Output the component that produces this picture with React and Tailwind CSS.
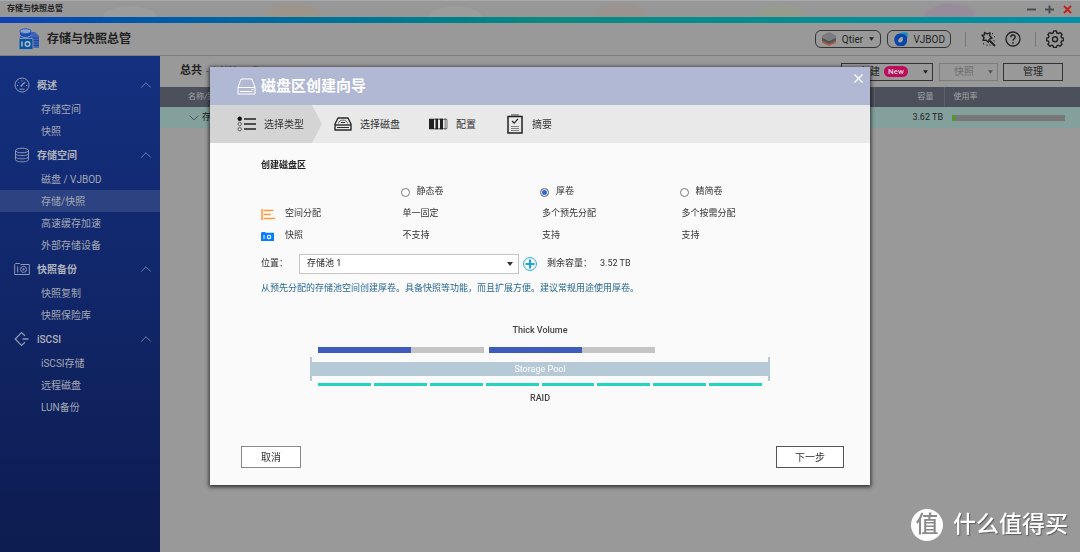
import React, { useState } from 'react';
import { ChevronDown, ChevronUp } from 'lucide-react';
import clsx from 'clsx';

const menu = [
  { id: 'overview', name: '概述', icon: GaugeIcon, items: ['存储空间', '快照'] },
  { id: 'storage', name: '存储空间', icon: DatabaseIcon, items: ['磁盘 / VJBOD', '存储/快照', '高速缓存加速', '外部存储设备'] },
  { id: 'backup', name: '快照备份', icon: SnapshotOutlineIcon, items: ['快照复制', '快照保险库'] },
  { id: 'iscsi', name: 'iSCSI', icon: IscsiIcon, items: ['iSCSI存储', '远程磁盘', 'LUN备份'] },
];

const steps = [
  { name: '选择类型', icon: TypeIcon },
  { name: '选择磁盘', icon: DiskIcon },
  { name: '配置', icon: ConfigIcon },
  { name: '摘要', icon: SummaryIcon },
];

const volumeTypes = [
  { id: 'static', name: '静态卷', allocation: '单一固定', snapshot: '不支持' },
  { id: 'thick', name: '厚卷', allocation: '多个预先分配', snapshot: '支持' },
  { id: 'thin', name: '精简卷', allocation: '多个按需分配', snapshot: '支持' },
];

function GaugeIcon() {
  return (
    <svg width="16" height="16" viewBox="0 0 16 16" fill="none" stroke="currentColor">
      <circle cx="8" cy="8" r="7" />
      <path d="M7.5 8.5 11 5" strokeWidth="1.2" />
      <circle cx="7.4" cy="8.8" r="1" fill="currentColor" stroke="none" />
      <path d="M3 8.5h1.2M4.3 5l.8.8M8 3.2v1.2M12 8.5h1.2M5.5 12.2h5" />
    </svg>
  );
}

function DatabaseIcon() {
  return (
    <svg width="16" height="16" viewBox="0 0 16 16" fill="none" stroke="currentColor">
      <ellipse cx="8" cy="3.5" rx="6.5" ry="2.3" />
      <path d="M1.5 3.5v9.2c0 1.2 3 2.1 6.5 2.1s6.5-.9 6.5-2.1V3.5" />
      <path d="M1.5 6.6c0 1.2 3 2.1 6.5 2.1s6.5-.9 6.5-2.1M1.5 9.7c0 1.2 3 2.1 6.5 2.1s6.5-.9 6.5-2.1" />
    </svg>
  );
}

function SnapshotOutlineIcon() {
  return (
    <svg width="16" height="16" viewBox="0 0 16 16" fill="none" stroke="currentColor">
      <path d="M.7 13.5v-10l1-1h4l1 1h8.6v10z" />
      <path d="M3.7 5.5v6" />
      <circle cx="9.5" cy="8.4" r="3" />
      <circle cx="9.5" cy="8.4" r="1.1" fill="currentColor" stroke="none" />
    </svg>
  );
}

function IscsiIcon() {
  return (
    <svg width="16" height="16" viewBox="0 0 16 16" fill="none" stroke="currentColor" strokeWidth="1.3">
      <path d="M11 4.8 7.5 1.6 1.2 8l6.3 6.4L11 11.2M8.5 8h6" />
    </svg>
  );
}

function AppLogo() {
  return (
    <svg width="22" height="22" viewBox="0 0 22 22">
      <path d="M12 4h5l4 4v12h-9z" fill="#3f63b5" />
      <path d="M14 10h7M14 12.5h7M14 15h7M14 17.5h7" stroke="#1d429c" />
      <path d="M2 3v9h11V3z" fill="#1c4bb0" />
      <ellipse cx="7.5" cy="3.2" rx="5.6" ry="2.4" fill="#8ba3c9" stroke="#1f5cc0" />
      <path d="M2 7c0 1.4 2.4 2.4 5.5 2.4S13 8.4 13 7" fill="none" stroke="#8ba3c9" />
      <rect x="1" y="10.5" width="14" height="11" rx="1" fill="#0a559f" stroke="#97a5b3" strokeWidth=".8" />
      <path d="M4 13.5v5" stroke="#b4bec8" strokeWidth="1.4" />
      <circle cx="9.5" cy="16" r="2.3" fill="none" stroke="#b4bec8" strokeWidth="1.4" />
    </svg>
  );
}

function QtierIcon() {
  return (
    <svg width="14" height="14" viewBox="0 0 14 14">
      <path d="M0 8v2.5L7 14l7-3.5V8l-7 3.5z" fill="#b05a44" />
      <path d="M0 5.5v3L7 12l7-3.5v-3L7 9z" fill="#505459" />
      <path d="M7 0 14 3.5v2L7 9 0 5.5v-2z" fill="#7c7c7c" />
    </svg>
  );
}

function VjbodIcon() {
  return (
    <svg width="15" height="14" viewBox="0 0 15 14">
      <path d="M6.5 1.5H14V8a6 6 0 0 1-12.5 1A6 6 0 0 1 6.5 1.5z" fill="#0a46a8" />
      <path d="M8 .5h6.5V6c-1-2.5-3.5-4-6.5-4z" fill="#128cc8" />
      <path d="M9.2 4.6C10.800 7.500 9.400 10.600 7 10.600S3.800 7 9.200 4.600z" fill="#a5a5a5" />
    </svg>
  );
}

function WandIcon() {
  return (
    <svg width="16" height="16" viewBox="0 0 16 16" fill="none" stroke="currentColor" strokeWidth="1.4" strokeLinejoin="round">
      <path d="m4.500 1.500 2.500 1.300 3-1-.2 3.200 2.200 2-2.700 1.200-.9 3-2.300-2-3.100.2 1-2.900L2 4.200l2.400-.3z" />
      <path d="m9.500 9.500 5.500 5.500" strokeWidth="2" />
      <path d="M12.500 2v1.300M14.500 5v1.300M14 9v1.300M3.500 12v1.300M7 13.500v1.300M10 13.500v1.300" strokeWidth="1" />
    </svg>
  );
}

function HelpIcon() {
  return (
    <svg width="16" height="16" viewBox="0 0 16 16" fill="none" stroke="currentColor" strokeWidth="1.3">
      <circle cx="8" cy="8" r="7" />
      <path d="M5.8 6.3c0-3 4.4-3 4.4-.2C10.2 7.800 8 7.800 8 9.800" strokeWidth="1.4" />
      <circle cx="8" cy="11.800" r=".9" fill="currentColor" stroke="none" />
    </svg>
  );
}

function GearIcon() {
  return (
    <svg width="18" height="18" viewBox="0 0 18 18" fill="none" stroke="currentColor" strokeWidth="1.4" strokeLinejoin="round">
      <path d="M7.600 1h2.800l.5 2 1.400.6 1.800-1.100 2 2-1.100 1.800.5 1.400 2 .4v2.400l-2 .6-.5 1.400 1.100 1.800-2 2-1.800-1.100-1.400.6-.5 1.700H7.600l-.5-1.700-1.400-.6-1.800 1.100-2-2L3 12.500l-.6-1.400-1.800-.6V8.100l1.800-.4L3 6.300 1.900 4.500l2-2 1.800 1.100L7.100 3z" />
      <circle cx="9" cy="9.200" r="2.500" />
    </svg>
  );
}

function DriveIcon() {
  return (
    <svg width="19" height="17" viewBox="0 0 19 17" fill="none" stroke="currentColor">
      <path d="M4 1h11l3 8.500V16H1V9.500z" />
      <path d="M1 9.500h17M3 13.500h12.500" />
      <path d="M14.500 11.500h2" />
    </svg>
  );
}

function TypeIcon() {
  return (
    <svg width="19" height="16" viewBox="0 0 19 16" fill="none" stroke="#222">
      <path d="M7 3h12M7 8h12M7 13h12" strokeWidth="1.5" />
      <circle cx="2.7" cy="2.7" r="2.2" fill="#111" stroke="none" />
      <circle cx="2.7" cy="8" r="1.7" stroke="#555" strokeWidth=".9" />
      <circle cx="2.7" cy="13.2" r="1.7" stroke="#555" strokeWidth=".9" />
    </svg>
  );
}

function DiskIcon() {
  return (
    <svg width="18" height="14" viewBox="0 0 18 14" fill="none" stroke="#2a2a2a" strokeWidth="1.4" strokeLinejoin="round">
      <path d="M4 1h10l3 6v6H1V7z" />
      <path d="M1 8h16" />
      <path d="M4.500 6.500c0-4.500 9-4.500 9 0" strokeWidth="1" stroke="#666" />
      <path d="M7 5.500h4M3 10.500h12" strokeWidth="1" />
    </svg>
  );
}

function ConfigIcon() {
  return (
    <svg width="19" height="12" viewBox="0 0 19 12">
      <path d="M0 .8h5v10.400H0zM6.500.8H9v10.400H6.500zM11 .8h3v10.400h-3z" fill="#222" />
      <path d="M5 1.200h9M5 10.800h9" stroke="#222" strokeWidth=".8" />
      <path d="M14 1.500h4v9h-4M16.200 0v12" stroke="#666" fill="none" strokeWidth=".9" />
    </svg>
  );
}

function SummaryIcon() {
  return (
    <svg width="16" height="20" viewBox="0 0 16 20" fill="none" stroke="#222">
      <path d="M1 2.500h14v16.500H1z" strokeWidth="1.5" />
      <path d="M4 1h8" strokeWidth="1.6" stroke="#777" />
      <path d="m5 7 2.200 2.200L11 4.800" strokeWidth="1.1" />
      <path d="M4 12.500h8M4 14.500h8M4 16.500h8" stroke="#777" strokeWidth=".9" />
    </svg>
  );
}

function AllocationIcon() {
  return (
    <svg width="14" height="11" viewBox="0 0 14 11" stroke="#ff9a3c" strokeWidth="1.6" className="block">
      <path d="M1 0v11" />
      <path d="M2.500 1.500h10M2.500 5.500h7.500M2.500 9.500H14" strokeWidth="1.3" />
    </svg>
  );
}

function SnapshotIcon() {
  return (
    <svg width="13" height="9" viewBox="0 0 13 9" className="block">
      <path d="M0 1.200.8 0h3.400l.6.800H13V9H0z" fill="#0a7cff" />
      <path d="M3 3v4" stroke="#fff" />
      <circle cx="8" cy="4.900" r="1.7" fill="none" stroke="#fff" strokeWidth="1.1" />
    </svg>
  );
}

function Caret({ className }) {
  return (
    <svg width="6" height="4" viewBox="0 0 6 4" className={className}>
      <path d="M0 0h6L3 4z" fill="currentColor" />
    </svg>
  );
}

function TitleBar() {
  return (
    <div className="flex h-[17px] items-center justify-between border-t border-[#a9a9b0] bg-[#979797] bg-[radial-gradient(ellipse_28px_12px_at_130px_17px,#9c9c9c_95%,transparent),radial-gradient(ellipse_30px_12px_at_295px_14px,#9d948b_80%,transparent),radial-gradient(ellipse_28px_12px_at_455px_17px,#9c9c9c_95%,transparent),radial-gradient(ellipse_28px_12px_at_620px_14px,#9a938e_80%,transparent),radial-gradient(ellipse_28px_12px_at_780px_14px,#969b8e_60%,transparent),radial-gradient(ellipse_28px_12px_at_950px_14px,#978c99_80%,transparent)] pl-[7px] pr-2">
      <span className="text-[8px] font-bold text-[#222]">存储与快照总管</span>
      <div className="flex items-center gap-[9px] text-[#4a4d55]">
        <button aria-label="最小化">
          <svg width="9" height="9" viewBox="0 0 9 9" stroke="currentColor" strokeWidth="2"><path d="M0 4.500h9" /></svg>
        </button>
        <button aria-label="最大化">
          <svg width="9" height="9" viewBox="0 0 9 9" stroke="currentColor" strokeWidth="2"><path d="M0 4.500h9M4.500.5v8" /></svg>
        </button>
        <button aria-label="关闭窗口" className="text-[#c02222]">
          <svg width="9" height="9" viewBox="0 0 9 9" stroke="currentColor" strokeWidth="2"><path d="m1 1 7 7M8 1 1 8" /></svg>
        </button>
      </div>
    </div>
  );
}

function Header() {
  return (
    <header className="flex h-[33px] items-center justify-between border-b border-[#7e7e7e] bg-[#999] pl-[18px] pr-4">
      <div className="flex items-center gap-[7px]">
        <AppLogo />
        <h1 className="text-[12px] font-bold text-[#202020]">存储与快照总管</h1>
      </div>
      <div className="flex items-center text-[#222]">
        <button className="flex h-[18px] w-[66px] items-center justify-between rounded-[6px] border border-[#333] px-[6px] text-[10px]">
          <QtierIcon />
          Qtier
          <Caret className="w-[5px]" />
        </button>
        <button className="ml-[6px] flex h-[18px] w-[64px] items-center justify-between rounded-[6px] border border-[#333] px-[5px] text-[10px]">
          <VjbodIcon />
          VJBOD
        </button>
        <div className="mx-[14px] h-[15px] w-px bg-[#777]" />
        <button aria-label="向导"><WandIcon /></button>
        <button aria-label="帮助" className="ml-[9px]"><HelpIcon /></button>
        <div className="ml-[14px] mr-[10px] h-[15px] w-px bg-[#777]" />
        <button aria-label="设置"><GearIcon /></button>
      </div>
    </header>
  );
}

function Sidebar() {
  return (
    <nav className="w-[160px] shrink-0 bg-linear-to-b from-[#143080] to-[#0d1c50] pt-4 text-[#a4a8b4]">
      {menu.map((group) => (
        <div key={group.id}>
          <button className="flex h-[26px] w-full items-center gap-[7px] pl-[14px] pr-[5px] text-[10px] font-bold text-[#b0b3bc]">
            <span className="text-[#8e97b4]"><group.icon /></span>
            <span className={clsx(group.id === 'iscsi' && 'font-medium')}>{group.name}</span>
            <ChevronUp size={18} strokeWidth={1.3} className="ml-auto text-[#7280a8]" />
          </button>
          <ul>
            {group.items.map((item) => (
              <li key={item}>
                <a
                  href="#"
                  className={clsx('flex h-[22px] items-center pl-[41px] text-[10px]', item === '存储/快照' && 'bg-[#2d4280]')}
                >
                  {item}
                </a>
              </li>
            ))}
          </ul>
        </div>
      ))}
    </nav>
  );
}

function StorageList() {
  return (
    <main className="min-w-0 flex-1 bg-[#999]">
      <div className="flex h-[31px] items-center justify-between pl-5 pr-[17px]">
        <div className="flex items-center gap-1 text-[9px] text-[#444]">
          <span className="text-[11px] font-bold text-[#222]">总共</span>
          <span>- 存储池: 1, 卷: 0</span>
        </div>
        <div className="flex text-[10px] text-[#222]">
          <button className="flex h-[18px] w-[92px] items-center border border-[#333] pl-[18px] pr-1">
            创建
            <span className="ml-1 rounded-full bg-[#c00a5c] px-[4px] text-[8px] font-medium leading-[11px] text-[#ddd]">New</span>
            <Caret className="ml-auto w-[5px]" />
          </button>
          <button disabled className="ml-[6px] flex h-[18px] w-[59px] items-center justify-between border border-[#7c7c7c] pl-[14px] pr-1 text-[#6e6e6e]">
            快照
            <Caret className="w-[5px] text-[#555]" />
          </button>
          <button className="ml-[5px] h-[18px] w-[60px] border border-[#333]">管理</button>
        </div>
      </div>
      <table className="w-full table-fixed border-collapse text-left">
        <thead>
          <tr className="h-5 bg-[#4c505a] text-[8px] text-[#a2a4a8]">
            <th className="pl-7 font-normal">名称/别名</th>
            <th className="w-[70px] border-x border-[#5d616b] pr-[10px] text-right font-normal">容量</th>
            <th className="w-[136px] pl-[9px] font-normal">使用率</th>
          </tr>
        </thead>
        <tbody>
          <tr className="h-[21px] bg-[#84a09d] text-[9px] text-[#222]">
            <td className="pl-[26px]">
              <div className="flex items-center">
                <ChevronDown size={16} strokeWidth={1.5} className="shrink-0 text-[#4b5b59]" />
                存储池 1
              </div>
            </td>
            <td className="pr-px text-right">3.62 TB</td>
            <td className="pl-2 pr-[15px]">
              <div className="h-[6px] bg-[#777]">
                <div className="h-full w-[3px] bg-[#4f9a25]" />
              </div>
            </td>
          </tr>
        </tbody>
      </table>
    </main>
  );
}

function VolumeDiagram() {
  return (
    <div className="mx-auto mt-7 w-full max-w-[460px] text-center text-[9px] font-medium leading-[14px] text-[#444]">
      <div>Thick Volume</div>
      <div className="mt-[10px] flex gap-[5px] pl-2 pr-[115px]">
        {[0, 1].map((n) => (
          <div key={n} className="flex h-[6px] flex-1 bg-[#c4c4c4]">
            <div className="w-[56%] bg-[#3f5bbb]" />
          </div>
        ))}
      </div>
      <div className="mt-1 flex h-6 items-center border-x-2 border-[#b6c9d7]">
        <div className="flex-1 bg-[#b6c9d7] font-normal text-white">Storage Pool</div>
      </div>
      <div className="mt-[2px] flex gap-[3px] px-2">
        {[...Array(8).keys()].map((n) => (
          <div key={n} className="h-[3px] flex-1 bg-[#23d6bd]" />
        ))}
      </div>
      <div className="mt-[5px]">RAID</div>
    </div>
  );
}

function VolumeWizard() {
  const [type, setType] = useState('thick');

  return (
    <div role="dialog" aria-label="磁盘区创建向导" className="w-full max-w-[660px] bg-[#fafafa] text-[9px] text-[#333] shadow-[0_1px_4px_1px_rgba(0,0,0,0.7)]">
      <div className="relative flex h-[38px] items-center gap-[5px] bg-[#b0b8d3] pl-[27px] text-white">
        <DriveIcon />
        <h2 className="text-[15px] font-bold">磁盘区创建向导</h2>
        <button aria-label="关闭" className="absolute right-[7px] top-[7px]">
          <svg width="9" height="9" viewBox="0 0 9 9" stroke="currentColor" strokeWidth="1.3"><path d="m.5.5 8 8M8.500.5l-8 8" /></svg>
        </button>
      </div>

      <ol className="flex h-[38px] bg-[#e9e9e9] text-[10px]">
        {steps.map((step, i) => (
          <li
            key={step.name}
            className={clsx(
              'flex items-center gap-2',
              i === 0 && 'bg-[#d4d4d4] pl-[27px] pr-[18px] [clip-path:polygon(0_0,calc(100%-10px)_0,100%_50%,calc(100%-10px)_100%,0_100%)]',
              i === 1 && 'pl-[11px]',
              i > 1 && 'pl-[29px]'
            )}
          >
            <span className="flex w-[19px] shrink-0 justify-center"><step.icon /></span>
            {step.name}
          </li>
        ))}
      </ol>

      <div className="px-[51px] pt-[14px]">
        <h3 className="font-bold leading-4 text-[#222]">创建磁盘区</h3>
        <table className="mt-2 w-full table-fixed text-left">
          <thead>
            <tr className="h-[22px]">
              <td />
              {volumeTypes.map((v) => (
                <th key={v.id} className="font-normal">
                  <label className="flex items-center gap-[7px]">
                    <input
                      type="radio"
                      name="volume-type"
                      value={v.id}
                      checked={type === v.id}
                      onChange={() => setType(v.id)}
                      className="size-[9px] appearance-none rounded-full border border-[#777] bg-white checked:bg-[#2f66dd] checked:shadow-[inset_0_0_0_1px_#fff]"
                    />
                    {v.name}
                  </label>
                </th>
              ))}
            </tr>
          </thead>
          <tbody>
            <tr className="h-[22px]">
              <th className="font-normal">
                <div className="flex items-center">
                  <span className="w-6"><AllocationIcon /></span>
                  空间分配
                </div>
              </th>
              {volumeTypes.map((v) => <td key={v.id} className="pl-[2px]">{v.allocation}</td>)}
            </tr>
            <tr className="h-[22px]">
              <th className="font-normal">
                <div className="flex items-center">
                  <span className="w-6"><SnapshotIcon /></span>
                  快照
                </div>
              </th>
              {volumeTypes.map((v) => <td key={v.id} className="pl-[2px]">{v.snapshot}</td>)}
            </tr>
          </tbody>
        </table>

        <div className="mt-[7px] flex items-center">
          <label htmlFor="location" className="w-[38px]">位置：</label>
          <div className="relative">
            <select id="location" className="h-5 w-[220px] appearance-none border border-[#c4c4c4] bg-white pl-[7px] text-[9px] text-[#222]">
              <option>存储池 1</option>
            </select>
            <Caret className="pointer-events-none absolute right-[6px] top-2" />
          </div>
          <button aria-label="新建存储池" className="ml-1 text-[#14a7e0]">
            <svg width="14" height="14" viewBox="0 0 14 14" fill="none" stroke="currentColor">
              <circle cx="7" cy="7" r="6.400" fill="#fff" />
              <path d="M7 2.500v9M2.500 7h9" strokeWidth="2" />
            </svg>
          </button>
          <span className="ml-[10px] w-[53px] whitespace-nowrap">剩余容量：</span>
          <span>3.52 TB</span>
        </div>
        <p className="mt-[7px] whitespace-nowrap leading-[14px] text-[#2a6a92]">
          从预先分配的存储池空间创建厚卷。具备快照等功能，而且扩展方便。建议常规用途使用厚卷。
        </p>
        <VolumeDiagram />
      </div>

      <div className="mt-[41px] flex justify-between pb-[17px] pl-[31px] pr-[26px] text-[10px]">
        <button className="h-[22px] w-[60px] border border-[#888] bg-white">取消</button>
        <button className="h-[22px] w-[68px] border border-[#555] bg-white">下一步</button>
      </div>
    </div>
  );
}

export default function App() {
  return (
    <div className="flex min-h-screen flex-col bg-[#999] font-[Roboto,'Noto_Sans_CJK_SC',sans-serif]">
      <TitleBar />
      <div className="h-[6px] bg-linear-to-r from-[#1040b4] via-[#0c8a80] via-50% to-[#0090a6]" />
      <Header />
      <div className="flex flex-1">
        <Sidebar />
        <StorageList />
      </div>

      <div className="fixed inset-0 flex items-center justify-center">
        <VolumeWizard />
      </div>

      <div className="pointer-events-none fixed bottom-[11px] right-3 flex items-center gap-[10px] text-[23px] text-white">
        <span className="flex size-8 items-center justify-center rounded-full bg-white font-medium text-[#8a8a8a]">值</span>
        <span className="font-medium leading-8 [text-shadow:1px_1px_1px_rgba(0,0,0,0.4)]">什么值得买</span>
      </div>
    </div>
  );
}
